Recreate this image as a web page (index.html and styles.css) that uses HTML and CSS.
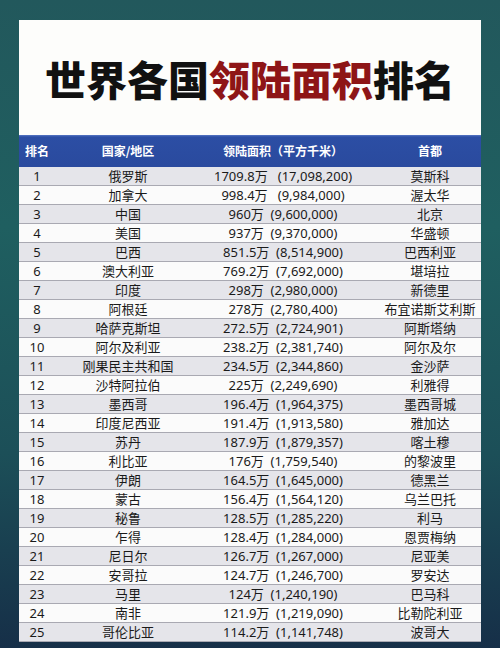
FILE: index.html
```html
<!DOCTYPE html>
<html lang="zh-CN">

<head>
    <meta charset="UTF-8">
    <meta name="viewport" content="width=device-width, initial-scale=1.0">
    <link rel="stylesheet" href="styles.css">
</head>

<body>
    <div class="frame">
        <div class="panel">
            <div class="title">世界各国<span class="red">领陆面积</span>排名</div>
            <div class="table">
                <div class="row head">
                    <div class="c1">排名</div>
                    <div class="c2">国家/地区</div>
                    <div class="c3">领陆面积（平方千米）</div>
                    <div class="c4">首都</div>
                </div>
                <div class="row"><div class="c1">1</div><div class="c2">俄罗斯</div><div class="c3">1709.8万&nbsp;&nbsp;&nbsp;(17,098,200)</div><div class="c4">莫斯科</div></div>
                <div class="row"><div class="c1">2</div><div class="c2">加拿大</div><div class="c3">998.4万&nbsp;&nbsp;&nbsp;(9,984,000)</div><div class="c4">渥太华</div></div>
                <div class="row"><div class="c1">3</div><div class="c2">中国</div><div class="c3">960万&nbsp;&nbsp;(9,600,000)</div><div class="c4">北京</div></div>
                <div class="row"><div class="c1">4</div><div class="c2">美国</div><div class="c3">937万&nbsp;&nbsp;(9,370,000)</div><div class="c4">华盛顿</div></div>
                <div class="row"><div class="c1">5</div><div class="c2">巴西</div><div class="c3">851.5万&nbsp;&nbsp;(8,514,900)</div><div class="c4">巴西利亚</div></div>
                <div class="row"><div class="c1">6</div><div class="c2">澳大利亚</div><div class="c3">769.2万&nbsp;&nbsp;(7,692,000)</div><div class="c4">堪培拉</div></div>
                <div class="row"><div class="c1">7</div><div class="c2">印度</div><div class="c3">298万&nbsp;&nbsp;(2,980,000)</div><div class="c4">新德里</div></div>
                <div class="row"><div class="c1">8</div><div class="c2">阿根廷</div><div class="c3">278万&nbsp;&nbsp;(2,780,400)</div><div class="c4">布宜诺斯艾利斯</div></div>
                <div class="row"><div class="c1">9</div><div class="c2">哈萨克斯坦</div><div class="c3">272.5万&nbsp;&nbsp;(2,724,901)</div><div class="c4">阿斯塔纳</div></div>
                <div class="row"><div class="c1">10</div><div class="c2">阿尔及利亚</div><div class="c3">238.2万&nbsp;&nbsp;(2,381,740)</div><div class="c4">阿尔及尔</div></div>
                <div class="row"><div class="c1">11</div><div class="c2">刚果民主共和国</div><div class="c3">234.5万&nbsp;&nbsp;(2,344,860)</div><div class="c4">金沙萨</div></div>
                <div class="row"><div class="c1">12</div><div class="c2">沙特阿拉伯</div><div class="c3">225万&nbsp;&nbsp;(2,249,690)</div><div class="c4">利雅得</div></div>
                <div class="row"><div class="c1">13</div><div class="c2">墨西哥</div><div class="c3">196.4万&nbsp;&nbsp;(1,964,375)</div><div class="c4">墨西哥城</div></div>
                <div class="row"><div class="c1">14</div><div class="c2">印度尼西亚</div><div class="c3">191.4万&nbsp;&nbsp;(1,913,580)</div><div class="c4">雅加达</div></div>
                <div class="row"><div class="c1">15</div><div class="c2">苏丹</div><div class="c3">187.9万&nbsp;&nbsp;(1,879,357)</div><div class="c4">喀土穆</div></div>
                <div class="row"><div class="c1">16</div><div class="c2">利比亚</div><div class="c3">176万&nbsp;&nbsp;(1,759,540)</div><div class="c4">的黎波里</div></div>
                <div class="row"><div class="c1">17</div><div class="c2">伊朗</div><div class="c3">164.5万&nbsp;&nbsp;(1,645,000)</div><div class="c4">德黑兰</div></div>
                <div class="row"><div class="c1">18</div><div class="c2">蒙古</div><div class="c3">156.4万&nbsp;&nbsp;(1,564,120)</div><div class="c4">乌兰巴托</div></div>
                <div class="row"><div class="c1">19</div><div class="c2">秘鲁</div><div class="c3">128.5万&nbsp;&nbsp;(1,285,220)</div><div class="c4">利马</div></div>
                <div class="row"><div class="c1">20</div><div class="c2">乍得</div><div class="c3">128.4万&nbsp;&nbsp;(1,284,000)</div><div class="c4">恩贾梅纳</div></div>
                <div class="row"><div class="c1">21</div><div class="c2">尼日尔</div><div class="c3">126.7万&nbsp;&nbsp;(1,267,000)</div><div class="c4">尼亚美</div></div>
                <div class="row"><div class="c1">22</div><div class="c2">安哥拉</div><div class="c3">124.7万&nbsp;&nbsp;(1,246,700)</div><div class="c4">罗安达</div></div>
                <div class="row"><div class="c1">23</div><div class="c2">马里</div><div class="c3">124万&nbsp;&nbsp;(1,240,190)</div><div class="c4">巴马科</div></div>
                <div class="row"><div class="c1">24</div><div class="c2">南非</div><div class="c3">121.9万&nbsp;&nbsp;(1,219,090)</div><div class="c4">比勒陀利亚</div></div>
                <div class="row"><div class="c1">25</div><div class="c2">哥伦比亚</div><div class="c3">114.2万&nbsp;&nbsp;(1,141,748)</div><div class="c4">波哥大</div></div>
            </div>
        </div>
    </div>
</body>

</html>
```

FILE: styles.css
```css
body {
    margin: 0;
    width: 500px;
    height: 648px;
    overflow: hidden;
    background: linear-gradient(to bottom, #22585c 0%, #1f5f60 35%, #1c4f58 70%, #162f48 100%);
    font-family: "Noto Sans", "Noto Sans CJK SC", sans-serif;
}

.frame {
    padding: 20px 19px 5px 19px;
}

.panel {
    background-color: #fdfdfb;
}

.title {
    height: 115px;
    display: flex;
    align-items: center;
    justify-content: center;
    font-family: "Noto Sans CJK SC", sans-serif;
    font-weight: 900;
    font-size: 41px;
    color: #111111;
    letter-spacing: 0;
}

.title .red {
    color: #8e1516;
}

.table {
    display: flex;
    flex-direction: column;
}

.row {
    display: grid;
    grid-template-columns: 36px 146px 164px 1fr;
    height: 19px;
    box-sizing: border-box;
    border-bottom: 1px solid #a9a9b2;
    font-size: 13px;
    color: #1a1a1a;
    align-items: center;
    line-height: 18px;
}

.row:nth-child(even) {
    background-color: #e5e5ea;
}

.row:nth-child(odd) {
    background-color: #fbfbfb;
}

.row.head {
    height: 32px;
    border-bottom: none;
    background: linear-gradient(to bottom, #5877c4 0, #2c4ea4 2px, #2a4a9e 100%);
    color: #ffffff;
    font-family: "Noto Sans CJK SC", sans-serif;
    font-weight: 700;
    font-size: 12px;
}

.c1,
.c2,
.c3,
.c4 {
    text-align: center;
    white-space: nowrap;
}

.c2,
.c4 {
    font-family: "Noto Sans CJK SC", sans-serif;
}

.c4 {
    padding-left: 14px;
}
```
